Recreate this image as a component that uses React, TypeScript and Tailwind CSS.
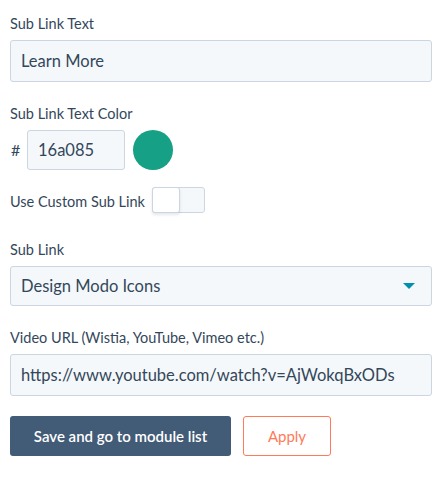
const font = { fontFamily: "Lato, 'Open Sans', sans-serif" };

function Label({ children }: { children: React.ReactNode }) {
  return <p className="text-[14.5px] leading-5 text-[#33475b] mb-[6px]">{children}</p>;
}

export default function App() {
  return (
    <div style={font} className="bg-white min-h-screen pl-[10px] pt-[14px] text-[#33475b]">
      <div className="w-[422px]">
        {/* Sub link text */}
        <Label>Sub Link Text</Label>
        <input
          type="text"
          defaultValue="Learn More"
          className="w-full h-[42px] px-[10px] text-[16.5px] bg-[#f5f8fa] border border-[#cbd6e2] rounded-[3px] text-[#33475b] focus:outline-none"
        />

        {/* Color */}
        <div className="mt-[22px]">
          <Label>Sub Link Text Color</Label>
          <div className="flex items-center h-[40px]">
            <span className="text-[16px] w-[17px] pl-px">#</span>
            <input
              type="text"
              defaultValue="16a085"
              className="w-[98px] h-[40px] px-[10px] text-[16.5px] bg-[#f5f8fa] border border-[#cbd6e2] rounded-[3px] text-[#33475b] focus:outline-none"
            />
            <div className="ml-[8px] w-[40px] h-[40px] rounded-full bg-[#16a085]" />
          </div>
        </div>

        {/* Toggle */}
        <div className="mt-[17px] flex items-center h-[26px] gap-[7px]">
          <span className="text-[14.5px] leading-5 mt-[3px]">Use Custom Sub Link</span>
          <div className="relative w-[53px] h-[26px] bg-[#f5f8fa] border border-[#cbd6e2] rounded-[3px]">
            <div className="absolute -left-px -top-px w-[28px] h-[26px] bg-white border border-[#cbd6e2] rounded-[3px] shadow-[0_2px_3px_rgba(45,62,80,0.12)]" />
          </div>
        </div>

        {/* Sub link select */}
        <div className="mt-[27px]">
          <Label>Sub Link</Label>
          <div className="flex items-center justify-between h-[40px] px-[10px] bg-[#f5f8fa] border border-[#cbd6e2] rounded-[3px]">
            <span className="text-[16.5px]">Design Modo Icons</span>
            <svg width="12" height="6" viewBox="0 0 12 6" className="mr-[6px]">
              <path d="M0 0 H12 L6 6 Z" fill="#0091ae" />
            </svg>
          </div>
        </div>

        {/* Video URL */}
        <div className="mt-[22px]">
          <Label>Video URL (Wistia, YouTube, Vimeo etc.)</Label>
          <input
            type="text"
            defaultValue="https://www.youtube.com/watch?v=AjWokqBxODs"
            className="w-full h-[42px] px-[10px] text-[16.5px] bg-[#f5f8fa] border border-[#cbd6e2] rounded-[3px] text-[#33475b] focus:outline-none"
          />
        </div>

        {/* Actions */}
        <div className="mt-[20px] flex gap-[12px]">
          <button className="w-[221px] h-[40px] bg-[#425b76] text-white text-[15px] font-semibold rounded-[3px]">
            Save and go to module list
          </button>
          <button className="w-[88px] h-[40px] bg-white border border-[#ff7a59] text-[#ff7a59] text-[15px] rounded-[3px]">
            Apply
          </button>
        </div>
      </div>
    </div>
  );
}
